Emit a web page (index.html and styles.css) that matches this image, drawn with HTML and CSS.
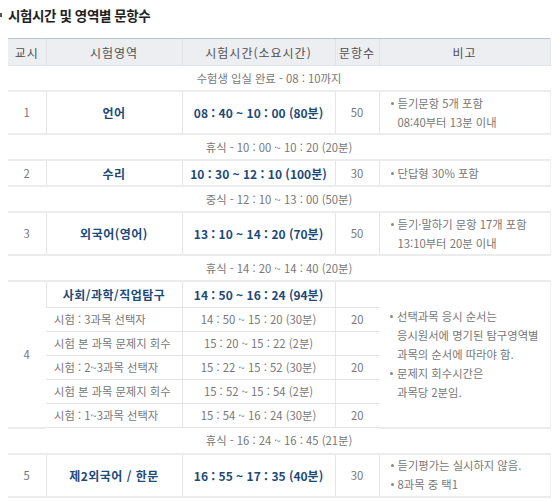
FILE: index.html
```html
<!DOCTYPE html>
<html lang="ko">
<head>
<meta charset="utf-8">
<link rel="stylesheet" href="styles.css">
</head>
<body>
<h2 class="title"><span class="mark"></span>시험시간 및 영역별 문항수</h2>
<table class="sched">
  <colgroup>
    <col class="c1"><col class="c2"><col class="c3"><col class="c4"><col class="c5">
  </colgroup>
  <thead>
    <tr><th>교시</th><th>시험영역</th><th>시험시간(소요시간)</th><th>문항수</th><th>비고</th></tr>
  </thead>
  <tbody>
    <tr class="brk"><td colspan="5" class="intro">수험생 입실 완료 - 08 : 10까지</td></tr>
    <tr class="tall">
      <td>1</td><td class="subj">언어</td><td class="time">08 : 40 ~ 10 : 00 (80분)</td><td>50</td>
      <td class="note"><ul><li>듣기문항 5개 포함<br>08:40부터 13분 이내</li></ul></td>
    </tr>
    <tr class="brk"><td colspan="5">휴식 - 10 : 00 ~ 10 : 20 (20분)</td></tr>
    <tr>
      <td>2</td><td class="subj">수리</td><td class="time">10 : 30 ~ 12 : 10 (100분)</td><td>30</td>
      <td class="note"><ul><li>단답형 30% 포함</li></ul></td>
    </tr>
    <tr class="brk"><td colspan="5">중식 - 12 : 10 ~ 13 : 00 (50분)</td></tr>
    <tr class="tall">
      <td>3</td><td class="subj">외국어(영어)</td><td class="time">13 : 10 ~ 14 : 20 (70분)</td><td>50</td>
      <td class="note"><ul><li>듣기·말하기 문항 17개 포함<br>13:10부터 20분 이내</li></ul></td>
    </tr>
    <tr class="brk"><td colspan="5">휴식 - 14 : 20 ~ 14 : 40 (20분)</td></tr>
    <tr class="sub first">
      <td rowspan="6">4</td><td class="subj">사회/과학/직업탐구</td><td class="time">14 : 50 ~ 16 : 24 (94분)</td><td></td>
      <td class="note" rowspan="6"><ul><li>선택과목 응시 순서는<br>응시원서에 명기된 탐구영역별<br>과목의 순서에 따라야 함.</li><li>문제지 회수시간은<br>과목당 2분임.</li></ul></td>
    </tr>
    <tr class="sub"><td class="left">시험 : 3과목 선택자</td><td>14 : 50 ~ 15 : 20 (30분)</td><td>20</td></tr>
    <tr class="sub"><td class="left">시험 본 과목 문제지 회수</td><td>15 : 20 ~ 15 : 22 (2분)</td><td></td></tr>
    <tr class="sub"><td class="left">시험 : 2~3과목 선택자</td><td>15 : 22 ~ 15 : 52 (30분)</td><td>20</td></tr>
    <tr class="sub"><td class="left">시험 본 과목 문제지 회수</td><td>15 : 52 ~ 15 : 54 (2분)</td><td></td></tr>
    <tr class="sub"><td class="left">시험 : 1~3과목 선택자</td><td>15 : 54 ~ 16 : 24 (30분)</td><td>20</td></tr>
    <tr class="brk"><td colspan="5">휴식 - 16 : 24 ~ 16 : 45 (21분)</td></tr>
    <tr class="tall">
      <td>5</td><td class="subj">제2외국어 / 한문</td><td class="time">16 : 55 ~ 17 : 35 (40분)</td><td>30</td>
      <td class="note"><ul><li>듣기평가는 실시하지 않음.</li><li>8과목 중 택1</li></ul></td>
    </tr>
  </tbody>
</table>
</body>
</html>
```
FILE: styles.css
```css
html, body {
  margin: 0;
  padding: 0;
  background: #fff;
}
body {
  font-family: "Noto Sans CJK KR", "Noto Sans", sans-serif;
  color: #777;
}
.title {
  position: relative;
  margin: 0;
  padding: 5px 0 0 8px;
  height: 33px;
  box-sizing: border-box;
  font-size: 13.5px;
  font-weight: bold;
  color: #222;
  letter-spacing: -0.4px;
  line-height: 20px;
}
.title .mark {
  position: absolute;
  left: 0;
  top: 13px;
  width: 2px;
  height: 4px;
  background: #555;
}
.sched {
  margin: 5px 0 0 8px;
  width: 542px;
  border-collapse: collapse;
  table-layout: fixed;
  font-size: 11.3px;
}
.c1 { width: 38px; }
.c2 { width: 136px; }
.c3 { width: 153px; }
.c4 { width: 44px; }
.c5 { width: 171px; }
.sched th {
  height: 26px;
  padding: 0;
  background: #eceef1;
  border-top: 1px solid #b9c2cc;
  border-bottom: 1px solid #dfe2e6;
  border-left: 1px solid #dfe2e6;
  font-weight: normal;
  color: #505050;
  font-size: 12px;
  letter-spacing: 1px;
}
.sched th:first-child { border-left: none; }
.sched th:last-child { border-right: 1px solid #e6e8ea; }
.sched td {
  padding: 0;
  height: 24px;
  text-align: center;
  border-bottom: 2px solid #ececec;
  border-left: 1px solid #e6e6e6;
  line-height: 19px;
}
.sched tr > td:first-child { border-left: none; }
.sched tr.sub td[rowspan] { border-left: none; }
.sched td.note { text-align: left; border-right: 1px solid #f0f0f0; }
.sched tr.brk td { height: 24px; border-left: none; }
.sched tr.brk td.intro { padding-right: 20px; }
.sched tr.tall td { height: 41px; }
.sched tr.sub td { height: 23px; border-bottom: 1px solid #e4e4e4; }
.sched tr.sub.first td { height: 25px; }
.sched tr.sub td[rowspan] { border-bottom: 2px solid #ececec; }
.sched tr.sub:last-child td { border-bottom: 2px solid #ececec; }
.subj, .time {
  font-weight: bold;
  color: #1e4a7a;
  font-size: 12px;
}
.subj { letter-spacing: 0.5px; }
.sched td.left {
  text-align: left;
  padding-left: 8px;
}
.note ul {
  list-style: none;
  margin: 0;
  padding: 0 0 0 18px;
}
.note li {
  position: relative;
}
.note li::before {
  content: "";
  position: absolute;
  left: -7px;
  top: 8px;
  width: 3px;
  height: 3px;
  border-radius: 50%;
  background: #888;
}
```
